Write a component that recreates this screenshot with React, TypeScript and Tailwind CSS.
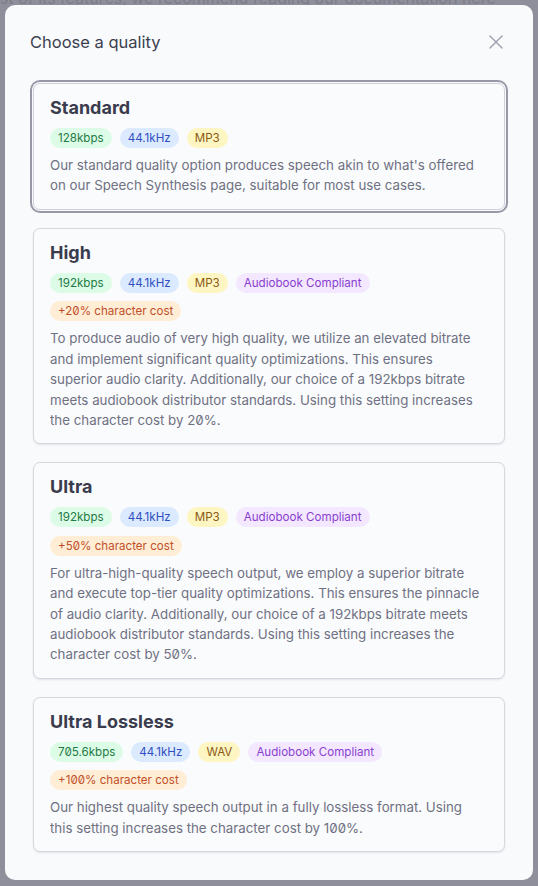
import React from 'react'

type Tone = 'green' | 'blue' | 'yellow' | 'purple' | 'orange'

const toneClass: Record<Tone, string> = {
  green: 'bg-[#dcfce7] text-[#1f7a45]',
  blue: 'bg-[#dbeafe] text-[#2f4fc2]',
  yellow: 'bg-[#fef6c2] text-[#8a5a14]',
  purple: 'bg-[#f3e8ff] text-[#8a3fd0]',
  orange: 'bg-[#ffedd5] text-[#c2502a]',
}

type Quality = {
  name: string
  badges: [string, Tone][]
  text: string
  selected?: boolean
}

const qualities: Quality[] = [
  {
    name: 'Standard',
    selected: true,
    badges: [
      ['128kbps', 'green'],
      ['44.1kHz', 'blue'],
      ['MP3', 'yellow'],
    ],
    text: "Our standard quality option produces speech akin to what's offered on our Speech Synthesis page, suitable for most use cases.",
  },
  {
    name: 'High',
    badges: [
      ['192kbps', 'green'],
      ['44.1kHz', 'blue'],
      ['MP3', 'yellow'],
      ['Audiobook Compliant', 'purple'],
      ['+20% character cost', 'orange'],
    ],
    text: 'To produce audio of very high quality, we utilize an elevated bitrate and implement significant quality optimizations. This ensures superior audio clarity. Additionally, our choice of a 192kbps bitrate meets audiobook distributor standards. Using this setting increases the character cost by 20%.',
  },
  {
    name: 'Ultra',
    badges: [
      ['192kbps', 'green'],
      ['44.1kHz', 'blue'],
      ['MP3', 'yellow'],
      ['Audiobook Compliant', 'purple'],
      ['+50% character cost', 'orange'],
    ],
    text: 'For ultra-high-quality speech output, we employ a superior bitrate and execute top-tier quality optimizations. This ensures the pinnacle of audio clarity. Additionally, our choice of a 192kbps bitrate meets audiobook distributor standards. Using this setting increases the character cost by 50%.',
  },
  {
    name: 'Ultra Lossless',
    badges: [
      ['705.6kbps', 'green'],
      ['44.1kHz', 'blue'],
      ['WAV', 'yellow'],
      ['Audiobook Compliant', 'purple'],
      ['+100% character cost', 'orange'],
    ],
    text: 'Our highest quality speech output in a fully lossless format. Using this setting increases the character cost by 100%.',
  },
]

const QualityCard = ({ q }: { q: Quality }) => (
  <div
    className={
      'rounded-[7px] border bg-[#fafbfc] px-[16px] pt-[13px] pb-[13px] shadow-[0_1px_2px_rgba(60,64,90,0.12)] ' +
      (q.selected
        ? 'border-[#cfd0da] ring-2 ring-[#9698a8] ring-offset-1 ring-offset-[#f9fafb]'
        : 'border-[#d6d7df]')
    }
  >
    <h3 className="text-[18px] leading-[22px] font-bold text-[#3a3c4e]">{q.name}</h3>
    <div className="mt-[9px] flex flex-wrap gap-x-[8px] gap-y-[8.5px]">
      {q.badges.map(([label, tone]) => (
        <span
          key={label}
          className={'h-[20px] rounded-full px-[8px] text-[11.6px] leading-[20px] ' + toneClass[tone]}
        >
          {label}
        </span>
      ))}
    </div>
    <p className="mt-[7px] text-[13.3px] leading-[20.4px] text-[#6f7183]">{q.text}</p>
  </div>
)

export default function App() {
  return (
    <div className="relative h-[886px] w-[538px] overflow-hidden bg-[#8e8f9b] font-['Inter',sans-serif] [font-feature-settings:'zero']">
      <p className="-mt-[12px] whitespace-nowrap text-[16px] leading-[20px] text-[#7c7d89]">
        st of its features, we recommend reading our documentation here
      </p>

      <div className="absolute top-[5px] left-[5px] h-[875px] w-[528px] rounded-[10px] bg-[#f9fafb]">
        <div className="flex items-center justify-between pt-[26px] pr-[30px] pl-[25px]">
          <h2 className="text-[16.5px] leading-[22px] text-[#3c3e50]">Choose a quality</h2>
          <svg width="14" height="14" viewBox="0 0 14 14" className="text-[#9c9eac]">
            <path d="M1 1L13 13M13 1L1 13" stroke="currentColor" strokeWidth="1.4" strokeLinecap="round" />
          </svg>
        </div>

        <div className="mt-[30px] flex flex-col gap-[18px] px-[28px]">
          {qualities.map((q) => (
            <QualityCard key={q.name} q={q} />
          ))}
        </div>
      </div>
    </div>
  )
}
